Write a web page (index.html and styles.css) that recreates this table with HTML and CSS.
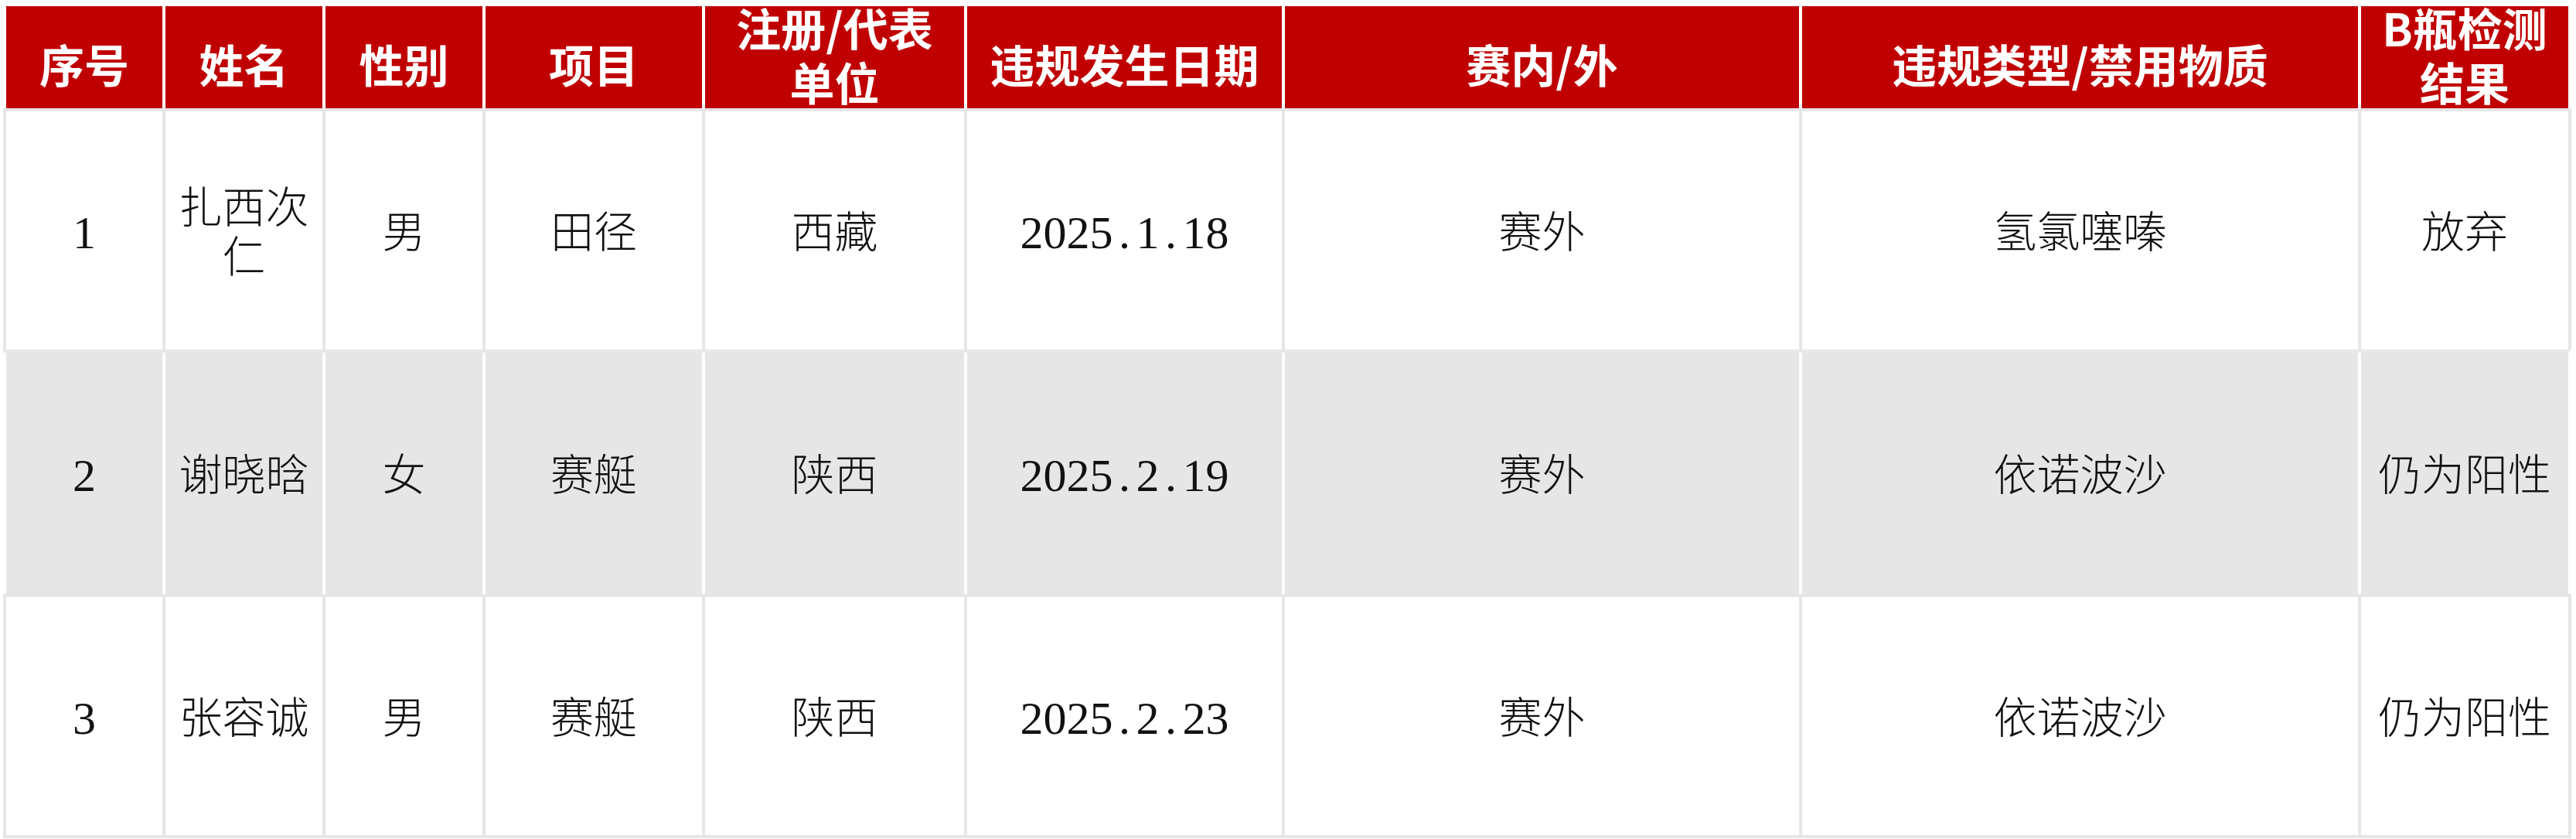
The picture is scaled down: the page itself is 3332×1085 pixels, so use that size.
FILE: index.html
```html
<!DOCTYPE html>
<html lang="zh-CN">
<head>
<meta charset="utf-8">
<title>违规名单</title>
<link rel="stylesheet" href="styles.css">
</head>
<body>
<div class="sheet">
  <div class="row head">
    <div class="cell">序号</div>
    <div class="cell">姓名</div>
    <div class="cell">性别</div>
    <div class="cell">项目</div>
    <div class="cell two">注册/代表<br>单位</div>
    <div class="cell">违规发生日期</div>
    <div class="cell">赛内/外</div>
    <div class="cell">违规类型/禁用物质</div>
    <div class="cell two">B瓶检测<br>结果</div>
  </div>
  <div class="row body r1">
    <div class="cell"><span class="num">1</span></div>
    <div class="cell">扎西次<br>仁</div>
    <div class="cell">男</div>
    <div class="cell">田径</div>
    <div class="cell">西藏</div>
    <div class="cell"><span class="num">2025<span class="dot">.</span>1<span class="dot">.</span>18</span></div>
    <div class="cell">赛外</div>
    <div class="cell">氢氯噻嗪</div>
    <div class="cell">放弃</div>
  </div>
  <div class="row body r2">
    <div class="cell"><span class="num">2</span></div>
    <div class="cell">谢晓晗</div>
    <div class="cell">女</div>
    <div class="cell">赛艇</div>
    <div class="cell">陕西</div>
    <div class="cell"><span class="num">2025<span class="dot">.</span>2<span class="dot">.</span>19</span></div>
    <div class="cell">赛外</div>
    <div class="cell">依诺波沙</div>
    <div class="cell">仍为阳性</div>
  </div>
  <div class="row body r3">
    <div class="cell"><span class="num">3</span></div>
    <div class="cell">张容诚</div>
    <div class="cell">男</div>
    <div class="cell">赛艇</div>
    <div class="cell">陕西</div>
    <div class="cell"><span class="num">2025<span class="dot">.</span>2<span class="dot">.</span>23</span></div>
    <div class="cell">赛外</div>
    <div class="cell">依诺波沙</div>
    <div class="cell">仍为阳性</div>
  </div>
</div>
</body>
</html>
```

FILE: styles.css
```css
* {
  box-sizing: border-box;
}

html, body {
  margin: 0;
  padding: 0;
  background: #ffffff;
}

.sheet {
  margin: 4px 0 0 4px;
  width: 3322px;
}

.row {
  display: grid;
  grid-template-columns: 206px 207px 207px 284px 339px 411px 669px 723px 272px;
  border-right: 4px solid var(--line);
  border-top: 4px solid var(--line);
}

.cell {
  border-left: 4px solid var(--line);
  display: flex;
  align-items: center;
  justify-content: center;
  text-align: center;
  overflow: visible;
  min-height: 0;
}

.head {
  --line: #ffffff;
  height: 136px;
  grid-template-rows: 132px;
}

.head .cell {
  background: #c00000;
  color: #ffffff;
  font-family: "Noto Sans CJK SC", sans-serif;
  font-weight: 700;
  font-size: 58px;
  line-height: 70px;
  padding-top: 16px;
  overflow: hidden;
}

.head .two {
  padding-top: 0;
  padding-bottom: 8px;
}

.body .cell {
  color: #111111;
  font-family: "Liberation Serif", "Noto Sans CJK SC", serif;
  font-weight: 300;
  font-size: 56px;
  line-height: 64px;
  padding-top: 6px;
}

.r1 {
  --line: #e6e6e6;
  height: 312px;
  grid-template-rows: 308px;
}

.r2 {
  --line: #ffffff;
  border-top-color: #e8e8e8;
  height: 316px;
  grid-template-rows: 312px;
}

.r2 .cell {
  background: #e6e6e6;
}

.r3 {
  --line: #e6e6e6;
  height: 316px;
  grid-template-rows: 308px;
  border-bottom: 4px solid #e6e6e6;
}

.num {
  font-family: "Liberation Serif", serif;
  font-weight: 400;
  font-size: 60px;
}

.dot {
  display: inline-block;
  width: 0.5em;
  text-align: center;
}
```
